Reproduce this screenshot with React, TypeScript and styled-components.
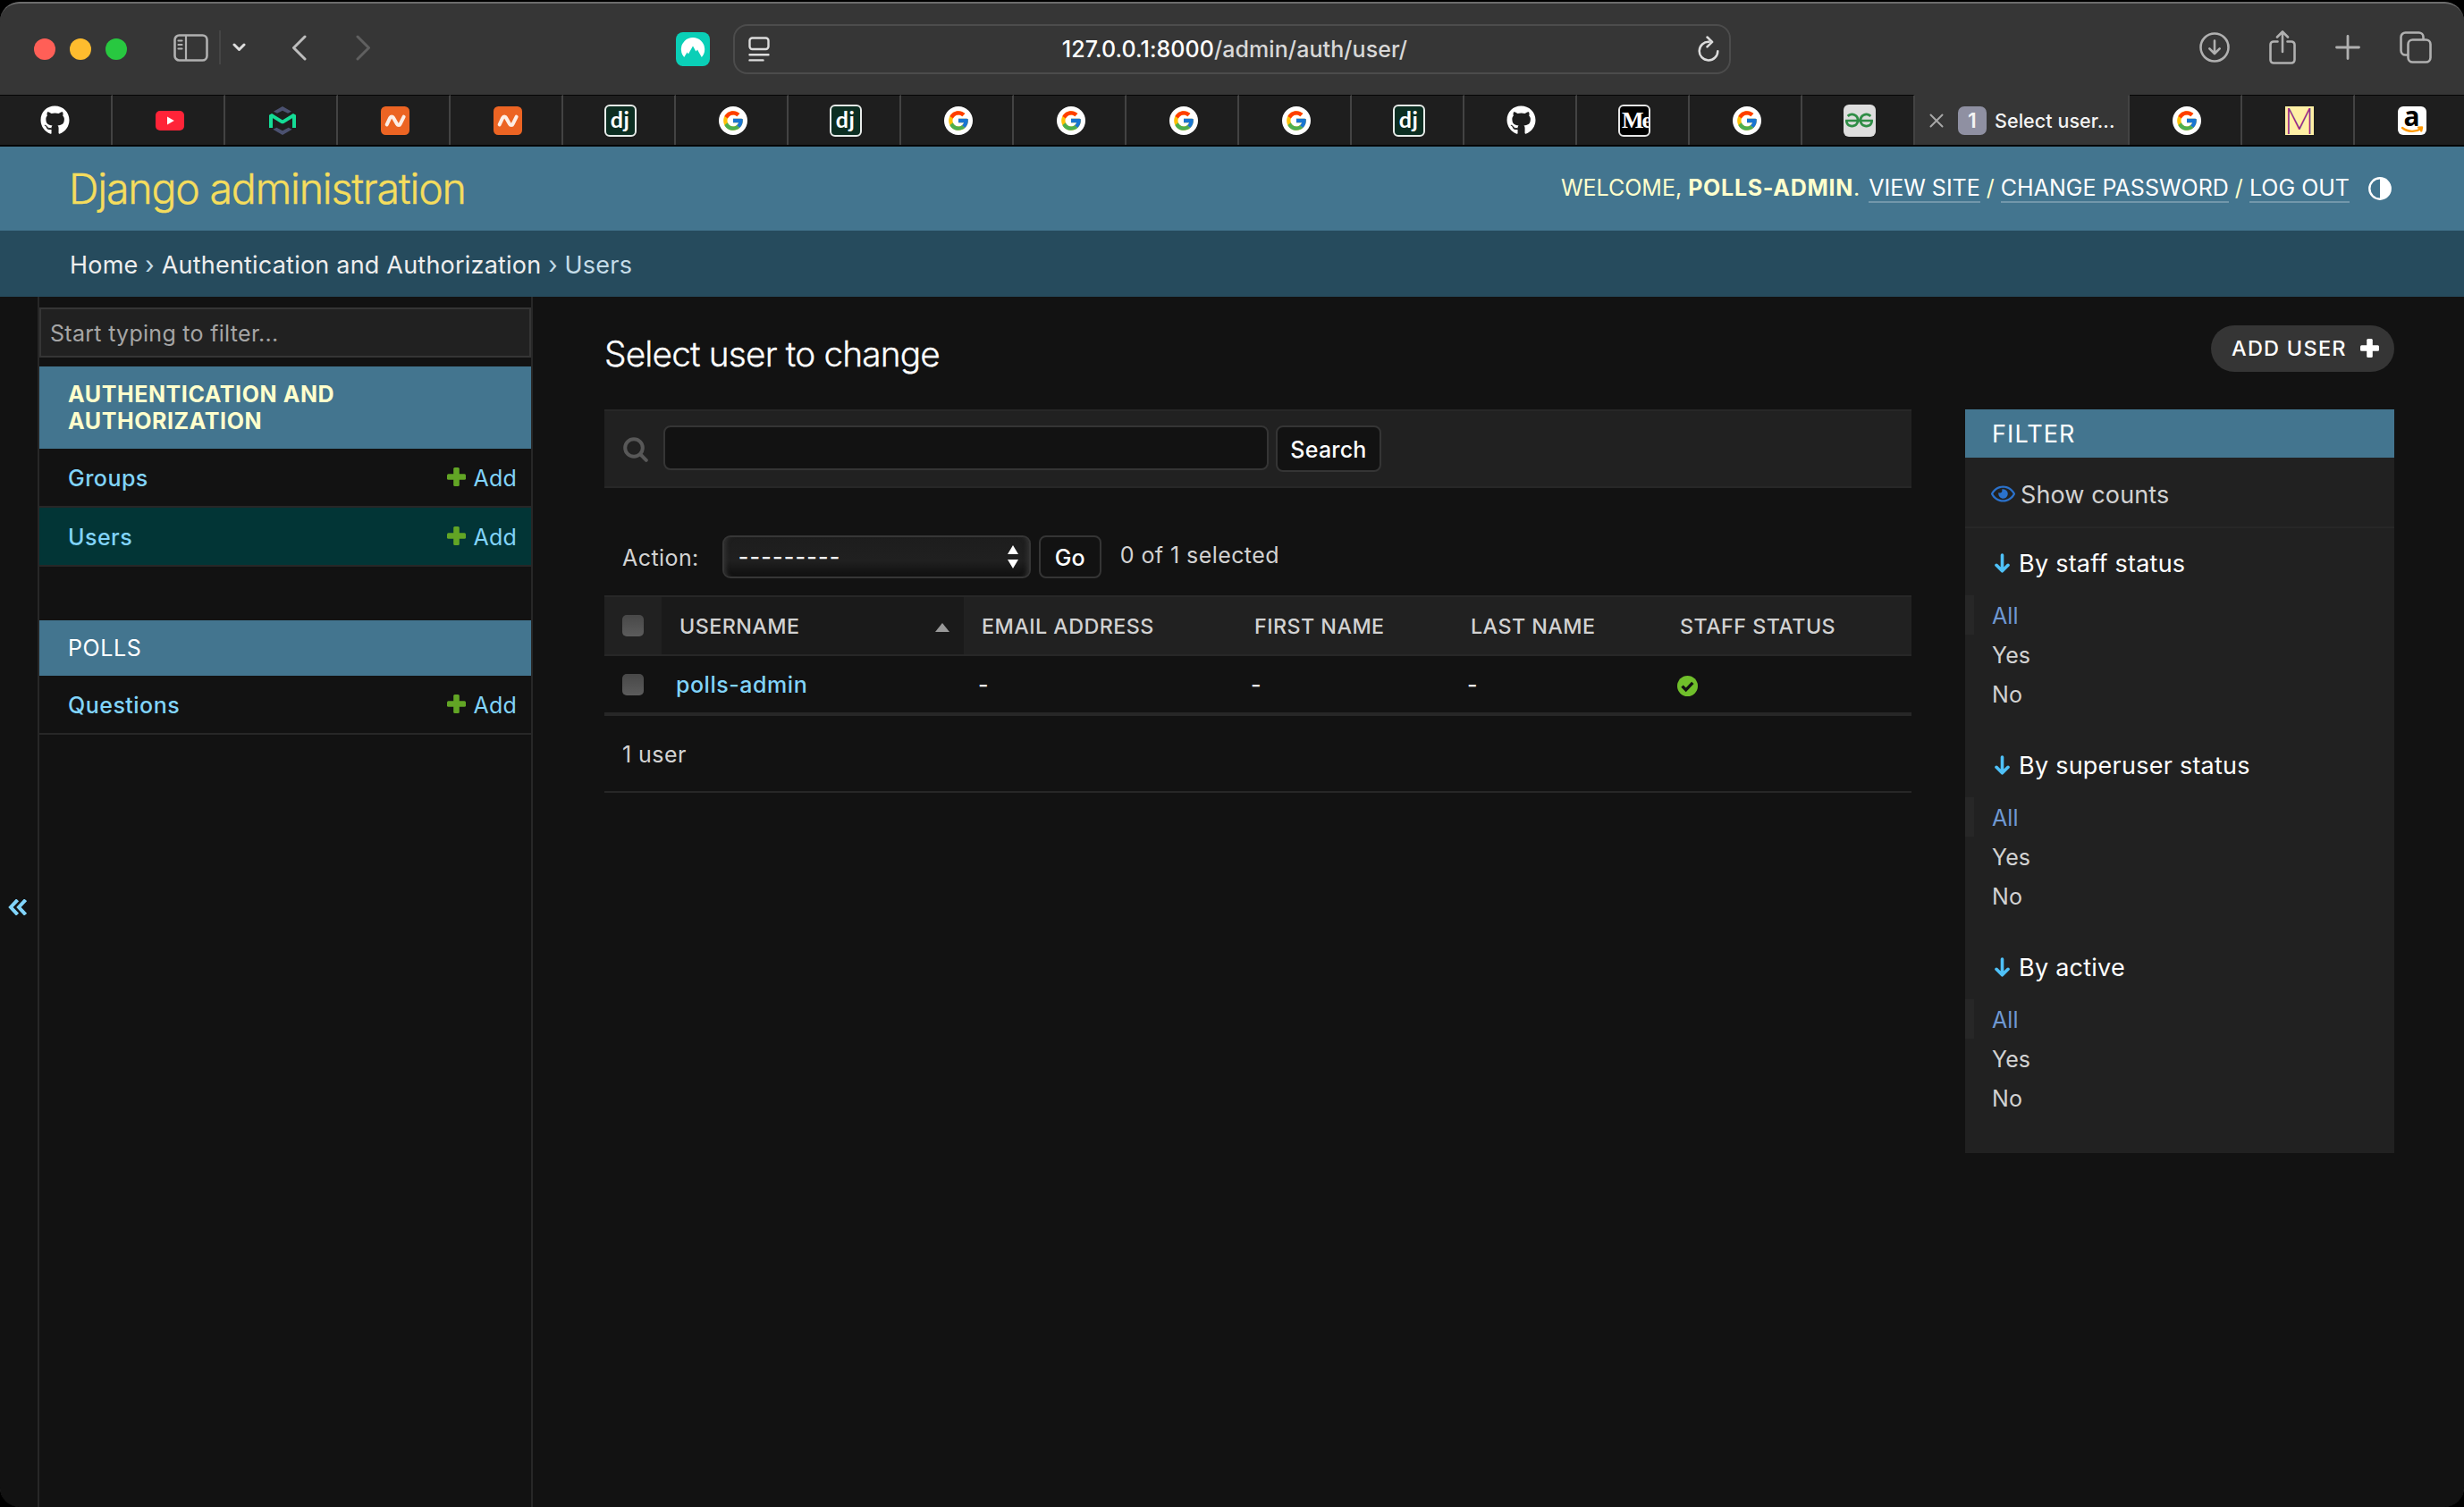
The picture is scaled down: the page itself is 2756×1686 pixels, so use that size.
import React from 'react';
import styled, { createGlobalStyle, css } from 'styled-components';
import { FaGithub, FaRegEye } from 'react-icons/fa';
import { FcGoogle } from 'react-icons/fc';
import { SiGeeksforgeeks } from 'react-icons/si';

const colors = {
  bg: '#121212',
  darkened: '#212121',
  hairline: '#272727',
  border: '#353535',
  header: '#43758f',
  breadcrumbs: '#264b5d',
  link: '#81d4fa',
  accent: '#f5dd5d',
  quiet: '#d2d2d2',
  text: '#eeeeee',
  chrome: '#363636',
};

const GlobalStyle = createGlobalStyle`
  * { box-sizing: border-box; }
  body {
    margin: 0;
    background: #000;
    color: ${colors.text};
    font-family: Inter, sans-serif;
    font-size: 25px;
    overflow: hidden;
  }
  svg { display: block; flex: none; }
`;

/* ---------- browser window ---------- */

const Desktop = styled.div`
  height: 1686px;
  padding-top: 2px;
`;

const Window = styled.div`
  position: relative;
  display: flex;
  flex-direction: column;
  height: 1684px;
  border-radius: 22px;
  overflow: hidden;
  background: ${colors.bg};

  &::after {
    content: '';
    position: absolute;
    inset: 0 -1px -1px;
    border: 1px solid #5a5a5a;
    border-top: 2px solid #6c6c6c;
    border-radius: 22px;
    pointer-events: none;
  }
`;

const Toolbar = styled.div`
  display: flex;
  align-items: center;
  height: 104px;
  flex: none;
  padding: 1px 36px 0 38px;
  background: ${colors.chrome};
  color: #b0b0b0;
`;

const Lights = styled.div`
  display: flex;
  gap: 16px;
  margin-right: 52px;
`;

const Light = styled.span<{ $color: string }>`
  width: 24px;
  height: 24px;
  border-radius: 50%;
  background: ${({ $color }) => $color};
`;

const Divider = styled.span`
  width: 2px;
  height: 38px;
  margin: 0 13px 0 12px;
  background: #454545;
`;

const NavIcons = styled.div`
  display: flex;
  align-items: center;
  width: 326px;
  flex: none;
  padding-bottom: 3px;
`;

const BackForward = styled.div`
  display: flex;
  gap: 55px;
  margin-left: 51px;
`;

const VpnSlot = styled.div`
  margin-left: 236px;
`;

const AddressBar = styled.div`
  display: grid;
  grid-template-columns: 30px 1fr 30px;
  align-items: center;
  width: 1116px;
  height: 56px;
  margin-left: 26px;
  padding: 0 11px 0 15px;
  border: 2px solid #4c4c4c;
  border-radius: 16px;
  color: #dcdcdc;

  svg:last-child { justify-self: end; }
`;

const Address = styled.div`
  padding-left: 2px;
  text-align: center;
  font-weight: 500;
  letter-spacing: 0.07px;
  color: #d8d8d8;

  b {
    font-weight: 500;
    color: #fff;
  }
`;

const ToolbarRight = styled.div`
  display: flex;
  align-items: center;
  gap: 44px;
  margin-left: auto;
  padding-bottom: 3px;
`;

const TabBar = styled.div`
  display: flex;
  height: 58px;
  flex: none;
  background: #1e1e1e;
  border-bottom: 2px solid #050505;
`;

const Tab = styled.div<{ $active?: boolean }>`
  display: flex;
  align-items: center;
  justify-content: center;
  flex: 0 0 ${({ $active }) => ($active ? 240 : 126)}px;
  padding-left: 3px;
  border-right: 2px solid #434343;
  border-top: 1px solid #050505;

  &:first-child { padding: 0 1px 0 0; }

  ${({ $active }) =>
    $active &&
    css`
      justify-content: flex-start;
      padding-left: 16px;
      border-top-color: ${colors.chrome};
      background: ${colors.chrome};
      color: #f4f4f4;
      font-size: 21.5px;
      font-weight: 500;
      letter-spacing: 0.06px;
    `}
`;

const TabCount = styled.span`
  display: grid;
  place-items: center;
  width: 32px;
  height: 32px;
  margin: 0 9px 0 16px;
  border-radius: 7px;
  background: #8f90a2;
  font-size: 23px;
  font-weight: 600;
`;

const Disc = styled.span`
  display: grid;
  place-items: center;
  width: 32px;
  height: 32px;
  border-radius: 50%;
  background: #fff;
`;

const Tile = styled.span<{ $bg: string; $size?: number; $border?: string; $clip?: boolean }>`
  display: flex;
  align-items: center;
  justify-content: center;
  width: ${({ $size = 32 }) => $size}px;
  height: ${({ $size = 32 }) => $size}px;
  border-radius: 6px;
  border: ${({ $border }) => ($border ? `2px solid ${$border}` : '0')};
  background: ${({ $bg }) => $bg};
  overflow: ${({ $clip }) => ($clip ? 'hidden' : 'visible')};
  line-height: 1;
`;

const DjText = styled.span`
  font: 700 25px/28px Lato, sans-serif;
  letter-spacing: 0.5px;
  padding-bottom: 4px;
  color: #fff;
`;

const SerifText = styled.span`
  font: 700 26px/32px 'Liberation Serif', serif;
  margin-left: 5px;
  letter-spacing: -2px;
  color: #fff;
`;

const ThinM = styled.span`
  font: 300 41px/32px Lato, sans-serif;
  color: #8f2a86;
  transform: scaleX(0.88);
`;

const SquareTile = styled(Tile)`
  border-radius: 0;
`;

const AmazonTile = styled(Tile)`
  flex-direction: column;
  font: 700 30px/20px 'Open Sans', sans-serif;
  color: #000;

  svg { margin-top: 1px; }
`;

/* ---------- page header ---------- */

const Header = styled.header`
  display: flex;
  align-items: center;
  justify-content: space-between;
  height: 94px;
  flex: none;
  padding: 0 81px 0 77px;
  background: ${colors.header};
`;

const SiteName = styled.div`
  font-size: 46.5px;
  font-weight: 300;
  letter-spacing: -1.2px;
  color: ${colors.accent};
  -webkit-text-stroke: 0.4px ${colors.accent};
`;

const UserTools = styled.div`
  display: flex;
  align-items: center;
  gap: 21px;
  padding-bottom: 3px;
  color: #ffffcc;
  white-space: pre;

  strong { letter-spacing: 0.7px; }
  svg { position: relative; top: 1px; }
`;

const ToolLink = styled.a`
  color: #fff;
  border-bottom: 2px solid rgba(255, 255, 255, 0.25);

  strong + & { margin-left: 3px; }
`;

const Breadcrumbs = styled.nav`
  height: 74px;
  flex: none;
  padding: 2px 78px 0;
  line-height: 73px;
  font-size: 27px;
  letter-spacing: 0.21px;
  background: ${colors.breadcrumbs};
  color: #c4dce8;

  a { color: #eee; }
`;

const Body = styled.div`
  display: flex;
  flex: 1;
`;

/* ---------- sidebar ---------- */

const Toggle = styled.div`
  display: flex;
  align-items: center;
  width: 42px;
  padding: 12px 0 0 9px;
`;

const Sidebar = styled.aside`
  width: 554px;
  padding-top: 12px;
  border: solid ${colors.hairline};
  border-width: 0 2px;
`;

const QuickFilter = styled.div`
  height: 56px;
  margin-bottom: 10px;
  padding: 1px 10px 0;
  line-height: 52px;
  border: 2px solid ${colors.border};
  background: ${colors.darkened};
  letter-spacing: 0.29px;
  color: #a5a5a5;
`;

const AppModule = styled.section`
  margin-bottom: 60px;
`;

const Caption = styled.div<{ $current?: boolean }>`
  padding: 16px 32px;
  line-height: 30px;
  background: ${colors.header};
  letter-spacing: 0.58px;
  font-weight: ${({ $current }) => ($current ? 700 : 400)};
  color: ${({ $current }) => ($current ? '#ffffcc' : '#fff')};
`;

const ModelRow = styled.div<{ $current?: boolean }>`
  display: flex;
  justify-content: space-between;
  height: 66px;
  padding: 1px 16px 0 32px;
  line-height: 64px;
  border-bottom: 2px solid ${colors.hairline};
  background: ${({ $current }) => ($current ? '#023536' : 'transparent')};
  letter-spacing: 0.48px;
  font-weight: 500;
  color: ${colors.link};
`;

const AddLink = styled.a`
  display: flex;
  gap: 9px;
  font-weight: 400;
  letter-spacing: 0.2px;

  svg { margin-top: 20px; }
`;

/* ---------- change list ---------- */

const Content = styled.main`
  flex: 1;
  padding: 0 78px 0 80px;
`;

const TitleRow = styled.div`
  display: flex;
  justify-content: space-between;
  height: 126px;
`;

const Title = styled.h1`
  margin: 40px 0 0;
  font-size: 38.8px;
  line-height: 48px;
  font-weight: 300;
  letter-spacing: -0.84px;
  color: #fff;
  -webkit-text-stroke: 0.3px #fff;
`;

const AddUser = styled.a`
  display: flex;
  align-items: center;
  justify-content: space-between;
  width: 205px;
  height: 52px;
  margin-top: 32px;
  padding: 0 17px 1px 23px;
  border-radius: 30px;
  background: #353535;
  font-size: 23.5px;
  font-weight: 500;
  letter-spacing: 1.25px;
  color: #fff;
`;

const Columns = styled.div`
  display: flex;
  align-items: flex-start;
  gap: 60px;
`;

const ChangeList = styled.div`
  flex: 1;
`;

const SearchBar = styled.div`
  display: flex;
  align-items: flex-start;
  height: 88px;
  padding: 16px 21px;
  border: solid ${colors.hairline};
  border-width: 2px 0;
  background: ${colors.darkened};

  svg { margin: 13px 17px 0 0; }
`;

const SearchInput = styled.div`
  width: 677px;
  height: 50px;
  margin-right: 8px;
  border: 2px solid ${colors.border};
  border-radius: 8px;
  background: ${colors.bg};
`;

const Button = styled.button<{ $width: number; $height: number }>`
  width: ${({ $width }) => $width}px;
  height: ${({ $height }) => $height}px;
  padding: 1px 0 0;
  border: 2px solid ${colors.border};
  border-radius: 8px;
  background: ${colors.bg};
  font: 500 25px Inter, sans-serif;
  letter-spacing: 0.22px;
  color: #fff;
`;

const Actions = styled.div`
  display: flex;
  height: 120px;
  padding: 53px 20px 0;
  line-height: 50px;
  letter-spacing: 0.43px;
  color: ${colors.quiet};
`;

const Select = styled.div`
  display: flex;
  align-items: center;
  justify-content: space-between;
  width: 345px;
  height: 48px;
  margin: 0 9px 0 26px;
  padding: 0 12px 0 16px;
  border: 2px solid #363636;
  border-radius: 9px;
  background: linear-gradient(#1d1d1d, #202020 60%, #121212 92%);
  box-shadow: inset 6px 0 5px -4px #333, inset -6px 0 5px -4px #333;
  letter-spacing: 1.2px;
  font-weight: 500;
  color: #fff;
`;

const Counter = styled.span`
  margin: -3px 0 0 21px;
`;

const columns = '64px 338px 305px 242px 234px 1fr';

const HeadRow = styled.div`
  display: grid;
  grid-template-columns: ${columns};
  height: 68px;
  border: solid ${colors.hairline};
  border-width: 2px 0;
  background: ${colors.darkened};
  font-size: 23.3px;
  font-weight: 500;
  letter-spacing: 0.45px;
  color: ${colors.quiet};
`;

const HeadCell = styled.div<{ $sorted?: boolean }>`
  display: flex;
  align-items: center;
  justify-content: space-between;
  padding: 0 16px 0 20px;
  background: ${({ $sorted }) => ($sorted ? '#1a1a1a' : 'transparent')};

  svg { margin-top: 4px; }
`;

const Row = styled.div`
  display: grid;
  grid-template-columns: ${columns};
  align-items: center;
  height: 67px;
  border-bottom: 4px solid ${colors.hairline};
`;

const Cell = styled.div<{ $link?: boolean }>`
  padding-left: 16px;
  font-weight: 500;
  letter-spacing: 0.53px;
  color: ${({ $link }) => ($link ? colors.link : colors.text)};

  svg { margin: 3px 0 0 1px; }
`;

const Checkbox = styled.span`
  width: 24px;
  height: 24px;
  margin: auto 0 auto 20px;
  border-radius: 5px;
  background: linear-gradient(#484848, #5c5c5c);
`;

const Paginator = styled.div`
  height: 86px;
  padding: 1px 20px 0;
  line-height: 84px;
  border-bottom: 2px solid ${colors.hairline};
  letter-spacing: 0.45px;
  color: ${colors.quiet};
`;

/* ---------- filter panel ---------- */

const FilterPanel = styled.aside`
  width: 480px;
  padding-bottom: 21px;
  background: ${colors.darkened};
  font-size: 27px;
`;

const FilterTitle = styled.div`
  padding: 2px 30px 0;
  line-height: 52px;
  background: ${colors.header};
  letter-spacing: 1.1px;
  color: #fff;
`;

const ShowCounts = styled.div`
  display: flex;
  gap: 6px;
  height: 79px;
  padding: 3px 29px 0;
  line-height: 78px;
  border-bottom: 2px solid #272727;
  letter-spacing: 0.12px;
  color: ${colors.quiet};

  svg { margin-top: 24px; color: #2b72cc; }
`;

const Facet = styled.section`
  height: 226px;
`;

const Summary = styled.div`
  display: flex;
  align-items: center;
  gap: 10px;
  height: 75px;
  padding: 3px 33px 0;
  letter-spacing: 0.24px;
  color: #fff;
`;

const Choice = styled.div<{ $selected?: boolean }>`
  height: 44px;
  padding: 1px 0 0 20px;
  line-height: 44px;
  font-size: 25px;
  letter-spacing: 0.1px;
  border-left: 10px solid ${({ $selected }) => ($selected ? '#272727' : 'transparent')};
  color: ${({ $selected }) => ($selected ? '#6f98d2' : colors.quiet)};
`;

/* ---------- icons ---------- */

const line = { fill: 'none', stroke: 'currentColor', strokeLinecap: 'round', strokeLinejoin: 'round' } as const;

const SidebarIcon = () => (
  <svg width="39" height="31" viewBox="0 0 39 31" {...line} strokeWidth="2.6">
    <rect x="1.5" y="1.5" width="36" height="28" rx="5" />
    <path d="M14 2v27M5.5 7.5h4M5.5 12h4M5.5 16.5h4" strokeWidth="2.2" />
  </svg>
);

const Chevron: React.FC<{ d: string; w: number; h: number; color: string; stroke?: number }> = ({ d, w, h, color, stroke = 3 }) => (
  <svg width={w} height={h} viewBox={`0 0 ${w} ${h}`} {...line} stroke={color} strokeWidth={stroke}>
    <path d={d} />
  </svg>
);

const VpnIcon = () => (
  <svg width="38" height="38" viewBox="0 0 38 38">
    <rect width="38" height="38" rx="8" fill="#0acfb7" />
    <path d="M9.2 28A13.2 13.2 0 1 1 28.8 28L24 19.4 22.4 21.6 19 15.6 13.9 24.5 12.6 22.6Z" fill="#fff" />
  </svg>
);

const ReaderIcon = () => (
  <svg width="24" height="28" viewBox="0 0 24 28" {...line} strokeWidth="2.4">
    <rect x="1.5" y="1.5" width="21" height="12.5" rx="3" />
    <path d="M1.5 20.2h21M1.5 26.4h15" />
  </svg>
);

const ReloadIcon = () => (
  <svg width="24" height="29" viewBox="0 0 24 29" {...line} strokeWidth="2.5">
    <path d="M12.5 6.8a10.3 10.3 0 1 0 9.8 10.4M10.5 1.5l5.6 5.4-5.6 5.4" />
  </svg>
);

const DownloadIcon = () => (
  <svg width="34" height="34" viewBox="0 0 34 34" {...line} strokeWidth="2.6">
    <circle cx="17" cy="17" r="15.5" />
    <path d="M17 9.5v14M11.3 18.3l5.7 5.7 5.7-5.7" />
  </svg>
);

const ShareIcon = () => (
  <svg width="30" height="38" viewBox="0 0 30 38" {...line} strokeWidth="2.6">
    <path d="M9.5 12.5H5a3.5 3.5 0 0 0-3.5 3.5v17A3.5 3.5 0 0 0 5 36.5h20a3.5 3.5 0 0 0 3.5-3.5V16a3.5 3.5 0 0 0-3.5-3.5h-4.5" />
    <path d="M15 24V2M9 7.5l6-6 6 6" />
  </svg>
);

const NewTabIcon = () => (
  <svg width="28" height="28" viewBox="0 0 28 28" {...line} strokeWidth="2.8">
    <path d="M14 1.5v25M1.5 14h25" />
  </svg>
);

const TabsIcon = () => (
  <svg width="36" height="36" viewBox="0 0 36 36" {...line} strokeWidth="2.6">
    <rect x="9.5" y="9.5" width="25" height="25" rx="5" />
    <path d="M9 26.5H6.5a5 5 0 0 1-5-5v-15a5 5 0 0 1 5-5h15a5 5 0 0 1 5 5V9" />
  </svg>
);

const YoutubeIcon = () => (
  <svg width="32" height="22" viewBox="0 0 32 22">
    <rect width="32" height="22" rx="5" fill="#ff2438" />
    <path d="M13 6.5v9l7.8-4.5z" fill="#fff" />
  </svg>
);

const HexMIcon = () => (
  <svg width="30" height="32" viewBox="0 0 90 96">
    <path d="M15 17 45 0l30 17-12 6-18-9-18 9zM13 77l12-6 20 11 20-11 12 6-32 19z" fill="#4b5170" />
    <path d="M6 72V29l39 24 39-24v43" fill="none" stroke="#14dc96" strokeWidth="12" strokeLinejoin="bevel" />
  </svg>
);

const NamecheapIcon = () => (
  <svg width="32" height="32" viewBox="0 0 96 96">
    <rect width="96" height="96" rx="16" fill="#ec6423" />
    <path d="M20 61 31 38c3-5 9-5 11 0l12 21c3 5 9 5 11 0l12-24" fill="none" stroke="#fdeee6" strokeWidth="12" strokeLinecap="round" strokeLinejoin="round" />
  </svg>
);

const ThemeIcon = () => (
  <svg width="26" height="26" viewBox="0 0 26 26">
    <circle cx="13" cy="13" r="11.7" fill="none" stroke="#fff" strokeWidth="2.4" />
    <path d="M13 1a12 12 0 0 1 0 24z" fill="#fff" />
  </svg>
);

const PlusIcon: React.FC<{ color: string }> = ({ color }) => (
  <svg width="21" height="21" viewBox="0 0 21 21" fill={color}>
    <rect x="7.2" width="6.6" height="21" rx="1.5" />
    <rect y="7.2" width="21" height="6.6" rx="1.5" />
  </svg>
);

const SearchIcon = () => (
  <svg width="28" height="28" viewBox="0 0 28 28" {...line} stroke="#585858" strokeWidth="4">
    <circle cx="12" cy="12" r="9.8" />
    <path d="m19.5 19.5 6.3 6.3" />
  </svg>
);

const DoubleChevron = () => (
  <svg width="21" height="18" viewBox="0 0 21 18" fill="none" stroke={colors.link} strokeWidth="4">
    <path d="M10.6 .8 3 9l7.6 8.2M19.6 .8 12 9l7.6 8.2" />
  </svg>
);

const DownArrow = () => (
  <svg width="17" height="22" viewBox="0 0 17 22" {...line} stroke="#4fc1f8" strokeWidth="3.6">
    <path d="M8.5 2v17M2 13.3l6.5 6.5 6.5-6.5" />
  </svg>
);

const YesIcon = () => (
  <svg width="23" height="23" viewBox="0 0 23 23">
    <circle cx="11.5" cy="11.5" r="11.5" fill="#70bf2b" />
    <path d="m5.5 11.6 4.2 4.2 7.6-8" fill="none" stroke="#121212" strokeWidth="3.4" />
  </svg>
);

const Google = () => <Disc><FcGoogle size={26} /></Disc>;
const Github = () => <FaGithub size={33} color="#fff" />;
const Django = () => <Tile $bg="#0c2e22" $size={36} $border="#e8ecea"><DjText>dj</DjText></Tile>;

const leftTabs = [
  Github, YoutubeIcon, HexMIcon, NamecheapIcon, NamecheapIcon, Django, Google, Django,
  Google, Google, Google, Google, Django, Github,
];

const facets = ['By staff status', 'By superuser status', 'By active'];

const Add = () => (
  <AddLink><PlusIcon color="#62a525" />Add</AddLink>
);

const App: React.FC = () => (
  <Desktop>
    <GlobalStyle />
    <Window>
      <Toolbar>
        <Lights>
          <Light $color="#ff5f57" />
          <Light $color="#febc2e" />
          <Light $color="#28c840" />
        </Lights>
        <NavIcons>
          <SidebarIcon />
          <Divider />
          <Chevron w={15} h={10} d="M2 2l5.5 5.5L13 2" color="#dedede" />
          <BackForward>
            <Chevron w={17} h={29} d="M15 2 2.5 14.5 15 27" color="#bdbdbd" />
            <Chevron w={17} h={29} d="M2 2l12.5 12.5L2 27" color="#606060" />
          </BackForward>
        </NavIcons>
        <VpnSlot><VpnIcon /></VpnSlot>
        <AddressBar>
          <ReaderIcon />
          <Address><b>127.0.0.1:8000</b>/admin/auth/user/</Address>
          <ReloadIcon />
        </AddressBar>
        <ToolbarRight>
          <DownloadIcon />
          <ShareIcon />
          <NewTabIcon />
          <TabsIcon />
        </ToolbarRight>
      </Toolbar>

      <TabBar>
        {leftTabs.map((Icon, i) => <Tab key={i}><Icon /></Tab>)}
        <Tab><Tile $bg="#000" $size={36} $border="#e6e6e6" $clip><SerifText>Me</SerifText></Tile></Tab>
        <Tab><Google /></Tab>
        <Tab><Tile $bg="#dedede" $size={36}><SiGeeksforgeeks size={31} color="#2f8d46" /></Tile></Tab>
        <Tab $active>
          <Chevron w={16} h={16} d="M1.5 1.5l13 13M14.5 1.5l-13 13" color="#a8a8a8" stroke={2} />
          <TabCount>1</TabCount>
          Select user...
        </Tab>
        <Tab><Google /></Tab>
        <Tab><SquareTile $bg="#fff0a5"><ThinM>M</ThinM></SquareTile></Tab>
        <Tab>
          <AmazonTile $bg="#fff">
            a
            <svg width="26" height="8" viewBox="0 0 26 8" {...line} stroke="#ff9900" strokeWidth="2.4">
              <path d="M2 2c6 5 15 5 21 1M20 1.6l4-.2-.8 4" />
            </svg>
          </AmazonTile>
        </Tab>
      </TabBar>

      <Header>
        <SiteName>Django administration</SiteName>
        <UserTools>
          <span>
            WELCOME, <strong>POLLS-ADMIN</strong>. <ToolLink>VIEW SITE</ToolLink> / <ToolLink>CHANGE PASSWORD</ToolLink> / <ToolLink>LOG OUT</ToolLink>
          </span>
          <ThemeIcon />
        </UserTools>
      </Header>

      <Breadcrumbs>
        <a>Home</a> › <a>Authentication and Authorization</a> › Users
      </Breadcrumbs>

      <Body>
        <Toggle><DoubleChevron /></Toggle>
        <Sidebar>
          <QuickFilter>Start typing to filter...</QuickFilter>
          <AppModule>
            <Caption $current>AUTHENTICATION AND<br />AUTHORIZATION</Caption>
            <ModelRow>Groups<Add /></ModelRow>
            <ModelRow $current>Users<Add /></ModelRow>
          </AppModule>
          <AppModule>
            <Caption>POLLS</Caption>
            <ModelRow>Questions<Add /></ModelRow>
          </AppModule>
        </Sidebar>

        <Content>
          <TitleRow>
            <Title>Select user to change</Title>
            <AddUser>ADD USER<PlusIcon color="#fff" /></AddUser>
          </TitleRow>
          <Columns>
            <ChangeList>
              <SearchBar>
                <SearchIcon />
                <SearchInput />
                <Button $width={118} $height={52}>Search</Button>
              </SearchBar>
              <Actions>
                Action:
                <Select>
                  ---------
                  <svg width="12" height="26" viewBox="0 0 12 26" fill="#fff">
                    <path d="M6 0l6 10H0zM6 26l6-10H0z" />
                  </svg>
                </Select>
                <Button $width={70} $height={48}>Go</Button>
                <Counter>0 of 1 selected</Counter>
              </Actions>
              <HeadRow>
                <Checkbox />
                <HeadCell $sorted>
                  USERNAME
                  <svg width="16" height="10" viewBox="0 0 16 10"><path d="M8 0l8 10H0z" fill="#999" /></svg>
                </HeadCell>
                <HeadCell>EMAIL ADDRESS</HeadCell>
                <HeadCell>FIRST NAME</HeadCell>
                <HeadCell>LAST NAME</HeadCell>
                <HeadCell>STAFF STATUS</HeadCell>
              </HeadRow>
              <Row>
                <Checkbox />
                <Cell $link>polls-admin</Cell>
                <Cell>-</Cell>
                <Cell>-</Cell>
                <Cell>-</Cell>
                <Cell><YesIcon /></Cell>
              </Row>
              <Paginator>1 user</Paginator>
            </ChangeList>

            <FilterPanel>
              <FilterTitle>FILTER</FilterTitle>
              <ShowCounts><FaRegEye size={27} />Show counts</ShowCounts>
              {facets.map((facet) => (
                <Facet key={facet}>
                  <Summary><DownArrow />{facet}</Summary>
                  <Choice $selected>All</Choice>
                  <Choice>Yes</Choice>
                  <Choice>No</Choice>
                </Facet>
              ))}
            </FilterPanel>
          </Columns>
        </Content>
      </Body>
    </Window>
  </Desktop>
);

export default App;
